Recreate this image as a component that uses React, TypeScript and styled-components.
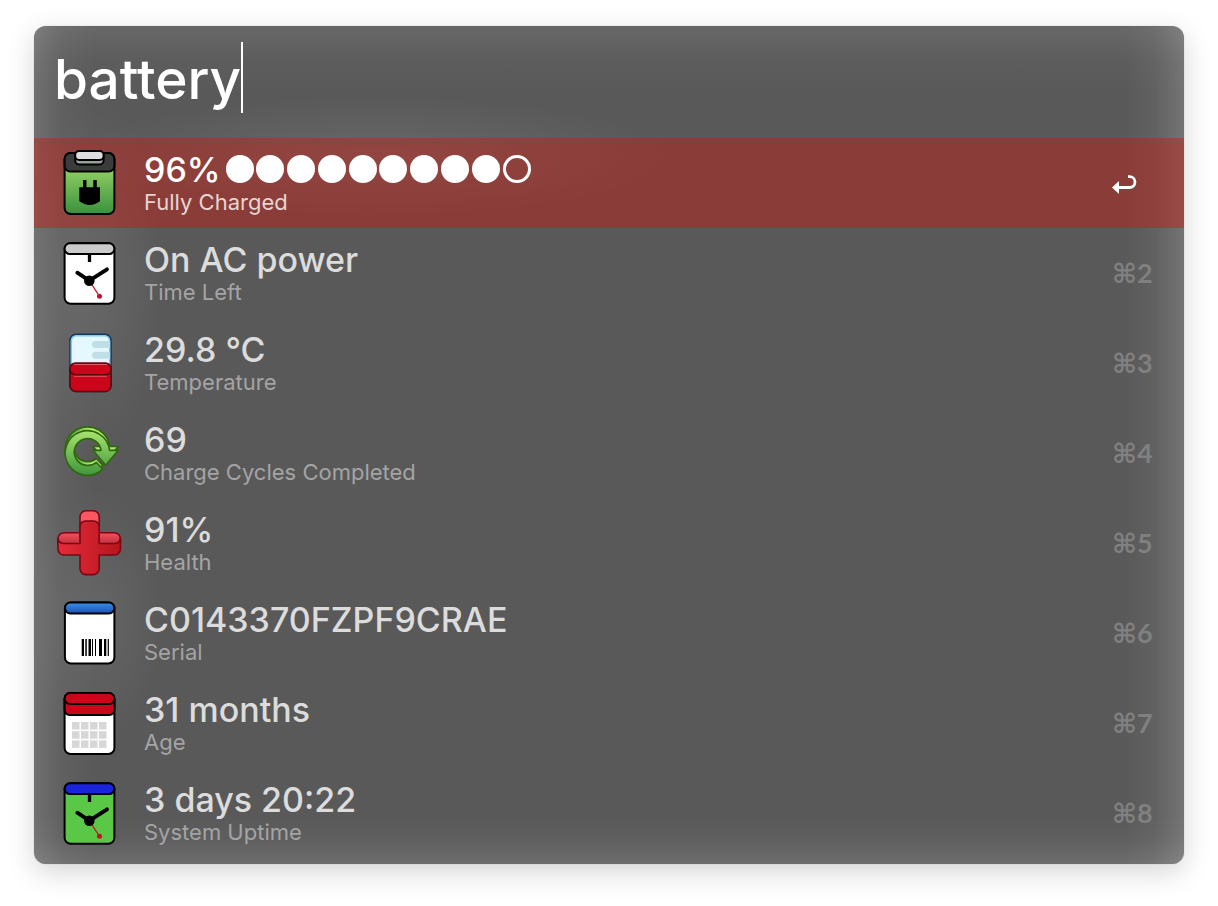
import React, { useState } from "react";
import styled, { createGlobalStyle } from "styled-components";

const GlobalStyle = createGlobalStyle`
  *, *::before, *::after { box-sizing: border-box; }
  body {
    margin: 0;
    background: #fff;
    font-family: Inter, "Liberation Sans", sans-serif;
  }
`;

const Page = styled.main`
  padding: 26px 34px 42px;
`;

const Panel = styled.section`
  overflow: hidden;
  padding-bottom: 6px;
  border-radius: 12px;
  background:
    radial-gradient(ellipse 70px 180px at 60px 250px, rgba(255, 255, 255, 0.09), transparent),
    radial-gradient(ellipse 70px 130px at 60px 590px, rgba(255, 255, 255, 0.08), transparent),
    radial-gradient(ellipse 300px 60px at 340px 130px, rgba(255, 255, 255, 0.09), transparent),
    linear-gradient(to right, rgba(255, 255, 255, 0.14), rgba(255, 255, 255, 0.04) 28px, transparent 60px),
    linear-gradient(to left, rgba(255, 255, 255, 0.16), rgba(255, 255, 255, 0.05) 28px, transparent 60px),
    linear-gradient(to bottom, rgba(255, 255, 255, 0.09), rgba(255, 255, 255, 0.02) 36px, transparent 70px),
    linear-gradient(to top, rgba(255, 255, 255, 0.12), rgba(255, 255, 255, 0.03) 26px, transparent 50px),
    #595959;
  box-shadow: 0 0 1px rgba(0, 0, 0, 0.3), 0 8px 28px rgba(0, 0, 0, 0.17);
`;

const SearchBar = styled.form`
  display: flex;
  height: 112px;
  padding: 16px 20px 0;
`;

const SearchInput = styled.input`
  field-sizing: content;
  max-width: 100%;
  height: 71px;
  padding: 2px 0 0;
  border: 0;
  border-right: 2px solid #fff;
  outline: 0;
  background: transparent;
  color: #fff;
  caret-color: transparent;
  font-family: inherit;
  font-size: 55px;
  font-weight: 500;
  line-height: 69px;
`;

const Results = styled.ul`
  margin: 0;
  padding: 0;
  list-style: none;
`;

const Row = styled.button<{ $active: boolean }>`
  display: flex;
  align-items: center;
  width: 100%;
  height: 90px;
  padding: 0 30px 0 21px;
  border: 0;
  background: ${(p) => (p.$active ? "rgba(208, 25, 13, 0.42)" : "transparent")};
  color: ${(p) => (p.$active ? "#fff" : "#dcdcdc")};
  font-family: inherit;
  text-align: left;
  outline: 0;
`;

const Icon = styled.svg`
  flex: none;
  width: 68px;
  height: 68px;
  margin-right: 21px;
`;

const Label = styled.span`
  flex: 1;
  min-width: 0;
`;

const Title = styled.span`
  display: flex;
  align-items: center;
  gap: 5px;
  font-size: 34px;
  font-weight: 500;
  line-height: 38px;
  white-space: nowrap;
`;

const Meter = styled.span`
  display: flex;
  justify-content: space-between;
  width: 305px;
  height: 30px;
`;

const Dot = styled.span<{ $filled: boolean }>`
  width: 28px;
  height: 28px;
  border: 3px solid currentColor;
  border-radius: 50%;
  background: ${(p) => (p.$filled ? "currentColor" : "transparent")};
`;

const Subtitle = styled.span<{ $active: boolean }>`
  display: block;
  color: ${(p) => (p.$active ? "#e6d3d2" : "#a4a4a4")};
  font-size: 22px;
  line-height: 26px;
`;

const Key = styled.kbd<{ $active: boolean }>`
  flex: none;
  display: flex;
  align-items: center;
  width: 42px;
  color: ${(p) => (p.$active ? "#fff" : "#808080")};
  font-family: Lato, "DejaVu Sans", sans-serif;
  font-size: 27px;
  font-weight: 700;
  line-height: 32px;
`;

const ReturnArrow = () => (
  <svg width="26" height="28" viewBox="0 0 26 28" aria-label="Return">
    <path d="M16 7.700h1.600a5.400 5.400 0 0 1 0 10.800H6" fill="none" stroke="currentColor" strokeWidth="2.800" />
    <path d="M0 18.500 7 12v13z" fill="currentColor" />
  </svg>
);

const BatteryIcon = () => (
  <Icon viewBox="0 0 68 68" aria-hidden="true">
    <defs>
      <linearGradient id="charge" x1="0" y1="0" x2="0" y2="1">
        <stop offset="0.3" stopColor="#8ccb62" />
        <stop offset="1" stopColor="#39913d" />
      </linearGradient>
    </defs>
    <rect x="9.6" y="4" width="49.8" height="61" rx="6" fill="url(#charge)" stroke="#000" strokeWidth="2" />
    <path d="M9.6 10a6 6 0 0 1 6-6h37.800a6 6 0 0 1 6 6v7a5.500 5.500 0 0 1-5.500 5.500H15.100A5.500 5.500 0 0 1 9.600 17z" fill="#3b3b3b" stroke="#000" strokeWidth="2" />
    <rect x="20.200" y="3" width="28.400" height="12.500" rx="4" fill="#98a098" stroke="#000" strokeWidth="2" />
    <rect x="20.200" y="2" width="28.400" height="9" rx="4" fill="#dedede" stroke="#000" strokeWidth="2" />
    <path d="M28 31h3.500v7.300h6.800V31h3.500v7.300H45v14Q40 56 34.700 56T24.300 52.300v-14H28z" fill="#000" />
  </Icon>
);

const ClockIcon = ({ cap, face }: { cap: string; face: string }) => (
  <Icon viewBox="0 0 68 68" aria-hidden="true">
    <rect x="9.600" y="4.300" width="49.800" height="60.500" rx="6" fill={face} stroke="#000" strokeWidth="2" />
    <rect x="9.600" y="4.300" width="49.800" height="10.800" rx="5.400" fill={cap} stroke="#000" strokeWidth="2" />
    <path d="M34.500 15v8" stroke="#000" strokeWidth="3.300" />
    <path d="M22.300 33.700 34.300 41.700 52 30.300" fill="none" stroke="#000" strokeWidth="3.800" strokeLinecap="round" />
    <path d="M34.300 41.700 44.500 57.300" stroke="#c8102a" strokeWidth="1.200" />
    <circle cx="44.500" cy="57.300" r="2.500" fill="#c8102a" />
    <circle cx="34.300" cy="41.700" r="5.300" fill="#000" />
  </Icon>
);

const TemperatureIcon = () => (
  <Icon viewBox="0 0 68 68" aria-hidden="true">
    <rect x="15" y="5.400" width="41" height="57" rx="6" fill="#e6f8ff" stroke="#17395c" strokeWidth="1.600" />
    <rect x="16.400" y="6.800" width="38.200" height="50" rx="5" fill="none" stroke="#74cdf0" strokeWidth="1.300" />
    <path d="M55 12H40.500a3.500 3.500 0 0 0 0 7H55zM55 22.700H40.500a3.500 3.500 0 0 0 0 7H55z" fill="#bfdfe7" />
    <path d="M15 39.500a5.500 5.500 0 0 1 5.500-5.500h30a5.500 5.500 0 0 1 5.500 5.500V56.500a6 6 0 0 1-6 6H21a6 6 0 0 1-6-6z" fill="#cb061b" stroke="#5a0712" strokeWidth="1.600" />
    <path d="M15 40a5.800 5.800 0 0 0 5.800 5.800h29.400A5.800 5.800 0 0 0 56 40" fill="none" stroke="#5a0712" strokeWidth="1.600" />
    <path d="M19.500 35.500h32M19.500 47.300h32" stroke="#d95a68" strokeWidth="1" strokeLinecap="round" />
  </Icon>
);

const cyclePath =
  "M47.700 50.300A22.300 22.300 0 1 1 54.600 31.300H63.300L50.700 46.300 38 31.300H46A13.400 13.400 0 1 0 41.300 43.300Z";

const CycleIcon = () => (
  <Icon viewBox="0 0 68 68" aria-hidden="true">
    <defs>
      <linearGradient id="cycle" x1="0" y1="0" x2="0" y2="1">
        <stop offset="0" stopColor="#a8e36e" />
        <stop offset="1" stopColor="#3f963c" />
      </linearGradient>
      <linearGradient id="cycleBack" x1="0" y1="0" x2="1" y2="0">
        <stop offset="0" stopColor="#3f9a36" />
        <stop offset="0.500" stopColor="#b4ec70" />
        <stop offset="1" stopColor="#a5df63" />
      </linearGradient>
    </defs>
    <g stroke="#30680f" strokeWidth="1.700" strokeLinejoin="round">
      <path d={cyclePath} transform="translate(0 -3.800)" fill="url(#cycleBack)" />
      <path d={cyclePath} fill="url(#cycle)" />
    </g>
  </Icon>
);

const HealthIcon = () => (
  <Icon viewBox="0 0 68 68" aria-hidden="true">
    <defs>
      <linearGradient id="crossFront" x1="0" y1="0" x2="1" y2="0">
        <stop offset="0" stopColor="#e52b3a" />
        <stop offset="1" stopColor="#b5161e" />
      </linearGradient>
      <linearGradient id="crossTop" x1="0" y1="0" x2="0" y2="1">
        <stop offset="0" stopColor="#f4505f" />
        <stop offset="1" stopColor="#a82532" />
      </linearGradient>
    </defs>
    <g stroke="#7c0711" strokeWidth="1.600">
      <rect x="3" y="23.800" width="62.400" height="16" rx="6" fill="url(#crossTop)" />
      <rect x="25" y="1.800" width="19.200" height="30" rx="6" fill="#fb5763" />
      <path
        d="M25 34.500V17.500a5.500 5.500 0 0 1 5.500-5.500h8.200a5.500 5.500 0 0 1 5.500 5.500V34.500H60a5.400 5.400 0 0 0 5.400-5.400V40a6 6 0 0 1-6 6H44.200V59.600a6 6 0 0 1-6 6H31a6 6 0 0 1-6-6V46H9a6 6 0 0 1-6-6V29.100a5.400 5.400 0 0 0 5.400 5.400z"
        fill="url(#crossFront)"
      />
    </g>
  </Icon>
);

const SerialIcon = () => (
  <Icon viewBox="0 0 68 68" aria-hidden="true">
    <defs>
      <linearGradient id="serialCap" x1="0" y1="0" x2="0" y2="1">
        <stop offset="0" stopColor="#3690ea" />
        <stop offset="1" stopColor="#1e50b4" />
      </linearGradient>
    </defs>
    <rect x="9.900" y="3.500" width="49.500" height="61" rx="6" fill="#fff" stroke="#000" strokeWidth="2" />
    <rect x="9.900" y="3.500" width="49.500" height="11" rx="5.500" fill="url(#serialCap)" stroke="#000" strokeWidth="2" />
    <path
      d="M26.700 40h2.300v17h-2.300zM30.300 40h1.500v17h-1.500zM33.500 40h2.500v17h-2.500zM37 40h1v17h-1zM40 40h1v17h-1zM44 40h3v17h-3zM49 40h2.300v17h-2.300zM52.700 40h1.200v17h-1.200z"
      fill="#000"
    />
  </Icon>
);

const CalendarIcon = () => (
  <Icon viewBox="0 0 68 68" aria-hidden="true">
    <rect x="9.600" y="4" width="49.800" height="61" rx="6" fill="#fff" stroke="#000" strokeWidth="2" />
    <path d="M9.600 10a6 6 0 0 1 6-6h37.800a6 6 0 0 1 6 6v11a5 5 0 0 1-5 5H14.600a5 5 0 0 1-5-5z" fill="#cb061b" stroke="#000" strokeWidth="2" />
    <rect x="9.600" y="4" width="49.800" height="11" rx="5.500" fill="#cb061b" stroke="#000" strokeWidth="2" />
    {[33, 42.2, 51.4].map((y) =>
      [17, 26, 35, 44].map((x) => <rect key={`${x}-${y}`} x={x} y={y} width="7.500" height="7.500" fill="#d7d7d7" />)
    )}
  </Icon>
);

const ChargeMeter = ({ level }: { level: number }) => (
  <Meter role="img" aria-label={`${level} of 10`}>
    {Array.from({ length: 10 }, (_, i) => (
      <Dot key={i} $filled={i < level} />
    ))}
  </Meter>
);

const items = [
  { title: "96%", level: 9, subtitle: "Fully Charged", icon: <BatteryIcon /> },
  { title: "On AC power", subtitle: "Time Left", icon: <ClockIcon cap="#cbcbcb" face="#fff" /> },
  { title: "29.8 °C", subtitle: "Temperature", icon: <TemperatureIcon /> },
  { title: "69", subtitle: "Charge Cycles Completed", icon: <CycleIcon /> },
  { title: "91%", subtitle: "Health", icon: <HealthIcon /> },
  { title: "C0143370FZPF9CRAE", subtitle: "Serial", icon: <SerialIcon /> },
  { title: "31 months", subtitle: "Age", icon: <CalendarIcon /> },
  { title: "3 days 20:22", subtitle: "System Uptime", icon: <ClockIcon cap="#1a24da" face="#5ac846" /> },
];

export default function App() {
  const [query, setQuery] = useState("battery");
  const [selected, setSelected] = useState(0);
  return (
    <Page>
      <GlobalStyle />
      <Panel>
        <SearchBar onSubmit={(e) => e.preventDefault()}>
          <SearchInput
            aria-label="Search"
            spellCheck={false}
            value={query}
            onChange={(e) => setQuery(e.target.value)}
          />
        </SearchBar>
        <Results>
          {items.map((item, i) => (
            <li key={item.subtitle}>
              <Row type="button" $active={i === selected} onClick={() => setSelected(i)}>
                {item.icon}
                <Label>
                  <Title>
                    {item.title}
                    {item.level !== undefined && <ChargeMeter level={item.level} />}
                  </Title>
                  <Subtitle $active={i === selected}>{item.subtitle}</Subtitle>
                </Label>
                <Key $active={i === selected}>
                  {i === selected ? <ReturnArrow /> : `⌘${i + 1}`}
                </Key>
              </Row>
            </li>
          ))}
        </Results>
      </Panel>
    </Page>
  );
}
